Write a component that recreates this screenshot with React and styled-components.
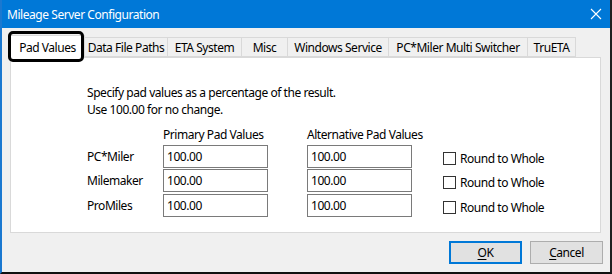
import React from 'react';
import styled, { createGlobalStyle } from 'styled-components';

const GlobalStyle = createGlobalStyle`
  html, body {
    margin: 0;
    padding: 0;
    background: #f0f0f0;
  }
  body {
    font-family: "Noto Sans", "Open Sans", "Liberation Sans", sans-serif;
    font-size: 12px;
    letter-spacing: -0.45px;
    color: #000;
  }
`;

const tabs = [
  { label: 'Pad Values', width: 75, selected: true },
  { label: 'Data File Paths', width: 83 },
  { label: 'ETA System', width: 74 },
  { label: 'Misc', width: 46 },
  { label: 'Windows Service', width: 101 },
  { label: 'PC*Miler Multi Switcher', width: 139 },
  { label: 'TruETA', width: 48 },
];

const rows = ['PC*Miler', 'Milemaker', 'ProMiles'];

const Window = styled.div`
  width: 612px;
  height: 274px;
  box-sizing: border-box;
  background: #f0f0f0;
  border-left: 2px solid #1a78d0;
  border-right: 2px solid #1f1f1f;
  border-bottom: 2px solid #111;
  display: flex;
  flex-direction: column;
  overflow: hidden;
`;

const TitleBar = styled.div`
  height: 28px;
  margin-left: -2px;
  margin-right: -2px;
  background: #0078d7;
  color: #fff;
  display: flex;
  align-items: center;
  justify-content: space-between;
  padding: 0 10px 0 7px;
  font-size: 12px;
  flex-shrink: 0;
`;

const CloseIcon = () => (
  <svg width="12" height="12" viewBox="0 0 12 12">
    <path d="M1 1 L11 11 M11 1 L1 11" stroke="#fff" strokeWidth="1.1" />
  </svg>
);

const TabStrip = styled.div`
  display: flex;
  align-items: flex-end;
  margin: 7px 0 0 8px;
  height: 22px;
  position: relative;
  z-index: 1;
`;

const Tab = styled.div`
  box-sizing: border-box;
  width: ${p => p.$width}px;
  height: ${p => (p.$selected ? 23 : 20)}px;
  margin-bottom: ${p => (p.$selected ? -1 : 0)}px;
  background: ${p => (p.$selected ? '#fff' : '#f0f0f0')};
  border: 1px solid #d9d9d9;
  border-bottom: ${p => (p.$selected ? 'none' : '1px solid #d9d9d9')};
  border-left: ${p => (p.$first || p.$selected ? '1px solid #d9d9d9' : 'none')};
  display: flex;
  align-items: center;
  justify-content: center;
  white-space: nowrap;
  padding-top: ${p => (p.$selected ? 0 : 1)}px;
  position: relative;
`;

const FocusRing = styled.div`
  position: absolute;
  left: -3px;
  top: -5px;
  right: 0;
  bottom: -4px;
  border: 3px solid #000;
  border-radius: 5px;
  pointer-events: none;
`;

const Panel = styled.div`
  box-sizing: border-box;
  margin-left: 8px;
  width: 591px;
  height: 176px;
  background: #fff;
  border: 1px solid #d9d9d9;
  padding: 27px 0 0 76px;
`;

const Intro = styled.p`
  margin: 0;
  line-height: 16.5px;
`;

const Form = styled.div`
  display: grid;
  grid-template-columns: 76px 105px 39px 105px 31px auto;
  grid-auto-rows: 23px;
  row-gap: 1.5px;
  margin-top: 2px;
  align-items: center;
`;

const ColumnHeader = styled.div`
  grid-column: ${p => p.$col};
  line-height: 16px;
  align-self: end;
  margin-bottom: 0;
  white-space: nowrap;
`;

const RowLabel = styled.div`
  grid-column: 1;
`;

const ValueBox = styled.div`
  grid-column: ${p => p.$col};
  box-sizing: border-box;
  height: 23px;
  border: 1px solid #7a7a7a;
  padding: 0 3px;
  display: flex;
  align-items: center;
`;

const CheckLabel = styled.label`
  grid-column: 6;
  display: flex;
  align-items: center;
  gap: 4px;
  padding-top: 4px;
  white-space: nowrap;
`;

const CheckBox = styled.span`
  box-sizing: border-box;
  width: 13px;
  height: 13px;
  border: 1px solid #333;
  background: #fff;
`;

const ButtonRow = styled.div`
  display: flex;
  justify-content: flex-end;
  gap: 8px;
  margin: 8px 7px 0 0;
`;

const Button = styled.div`
  box-sizing: border-box;
  width: 73px;
  height: 23px;
  background: #e1e1e1;
  border: ${p => (p.$default ? '2px solid #0078d7' : '1px solid #adadad')};
  display: flex;
  align-items: center;
  justify-content: center;
  u { text-decoration-thickness: 1px; text-underline-offset: 2px; }
`;

const App = () => (
  <Window>
    <GlobalStyle />
    <TitleBar>
      <span>Mileage Server Configuration</span>
      <CloseIcon />
    </TitleBar>
    <TabStrip>
      {tabs.map((t, i) => (
        <Tab key={t.label} $width={t.width} $selected={t.selected} $first={i === 0}>
          {t.label}
          {t.selected && <FocusRing />}
        </Tab>
      ))}
    </TabStrip>
    <Panel>
      <Intro>Specify pad values as a percentage of the result.</Intro>
      <Intro>Use 100.00 for no change.</Intro>
      <Form>
        <ColumnHeader $col={2}>Primary Pad Values</ColumnHeader>
        <ColumnHeader $col="4 / span 2">Alternative Pad Values</ColumnHeader>
        {rows.map(r => (
          <React.Fragment key={r}>
            <RowLabel>{r}</RowLabel>
            <ValueBox $col={2}>100.00</ValueBox>
            <ValueBox $col={4}>100.00</ValueBox>
            <CheckLabel><CheckBox />Round to Whole</CheckLabel>
          </React.Fragment>
        ))}
      </Form>
    </Panel>
    <ButtonRow>
      <Button $default><span><u>O</u>K</span></Button>
      <Button><span><u>C</u>ancel</span></Button>
    </ButtonRow>
  </Window>
);

export default App;
